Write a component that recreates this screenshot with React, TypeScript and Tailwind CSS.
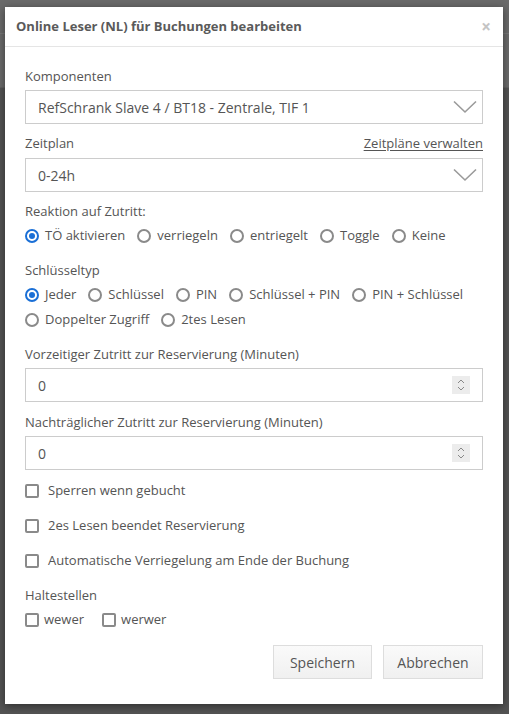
import { useState } from 'react';

const font = { fontFamily: '"Open Sans", "Liberation Sans", sans-serif' };

function Chevron() {
  return (
    <svg width="24" height="14" viewBox="0 0 24 14" className="shrink-0">
      <polyline points="1,1.5 12,12 23,1.5" fill="none" stroke="#9a9a9a" strokeWidth="1.6" />
    </svg>
  );
}

function Spinner() {
  return (
    <div className="w-[18px] h-[18px] bg-[#ececec] flex flex-col items-center justify-center gap-[2px]">
      <svg width="8" height="5" viewBox="0 0 8 5">
        <polyline points="1,4 4,1 7,4" fill="none" stroke="#888" strokeWidth="1" />
      </svg>
      <svg width="8" height="5" viewBox="0 0 8 5">
        <polyline points="1,1 4,4 7,1" fill="none" stroke="#888" strokeWidth="1" />
      </svg>
    </div>
  );
}

function Radio({ label, checked, onClick }: { label: string; checked: boolean; onClick: () => void }) {
  return (
    <label onClick={onClick} className="flex items-center gap-[6px] cursor-pointer h-5">
      <span
        className={
          'w-[14px] h-[14px] rounded-full border-2 flex items-center justify-center ' +
          (checked ? 'border-[#1a6fd6]' : 'border-[#8a8a8a]')
        }
      >
        {checked && <span className="w-[6px] h-[6px] rounded-full bg-[#1a6fd6]" />}
      </span>
      <span>{label}</span>
    </label>
  );
}

function Checkbox({ label, gap = 'gap-[10px]' }: { label: string; gap?: string }) {
  const [on, setOn] = useState(false);
  return (
    <label onClick={() => setOn(!on)} className={'flex items-center cursor-pointer h-5 ' + gap}>
      <span className="w-[14px] h-[14px] rounded-[2px] border-2 border-[#8a8a8a] flex items-center justify-center">
        {on && <span className="w-[6px] h-[6px] bg-[#555]" />}
      </span>
      <span>{label}</span>
    </label>
  );
}

export default function App() {
  const [reaktion, setReaktion] = useState('TÖ aktivieren');
  const [typ, setTyp] = useState('Jeder');

  return (
    <div className="relative w-[509px] h-[714px] overflow-hidden bg-[#535353]" style={font}>
      {/* page behind the overlay */}
      <div className="h-[88px] bg-[#6a6a6a] border-b border-[#606060]">
        <div className="h-[34px] border-b border-[#777]" />
      </div>

      <div className="absolute left-[5px] top-[7px] w-[498px] h-[697px] bg-white shadow-[0_2px_8px_rgba(0,0,0,0.45)] flex flex-col text-[13px] text-[#555]">
        {/* Header */}
        <div className="h-[40px] border-b border-[#e5e5e5] flex items-center justify-between pl-[11px] pr-[12px]">
          <h2 className="font-bold text-[13px] text-[#5a5a5a]">Online Leser (NL) für Buchungen bearbeiten</h2>
          <span className="text-[#c4c4c4] text-[17px] font-bold leading-none">×</span>
        </div>

        {/* Body */}
        <div className="px-5 pt-[19px] flex flex-col">
          <div className="h-5 leading-5">Komponenten</div>
          <div className="mt-1 h-[34px] border border-[#ccc] flex items-center justify-between pl-3 pr-[5px] text-[14px]">
            <span>RefSchrank Slave 4 / BT18 - Zentrale, TIF 1</span>
            <Chevron />
          </div>

          <div className="mt-[9px] h-5 leading-5 flex justify-between">
            <span>Zeitplan</span>
            <a className="underline underline-offset-2">Zeitpläne verwalten</a>
          </div>
          <div className="mt-[5px] h-[34px] border border-[#ccc] flex items-center justify-between pl-3 pr-[5px] text-[14px]">
            <span>0-24h</span>
            <Chevron />
          </div>

          <div className="mt-[9px] h-5 leading-5">Reaktion auf Zutritt:</div>
          <div className="mt-[5px] flex gap-[12px]">
            {['TÖ aktivieren', 'verriegeln', 'entriegelt', 'Toggle', 'Keine'].map((r) => (
              <Radio key={r} label={r} checked={reaktion === r} onClick={() => setReaktion(r)} />
            ))}
          </div>

          <div className="mt-[14px] h-5 leading-5">Schlüsseltyp</div>
          <div className="mt-[5px] flex gap-[12px]">
            {['Jeder', 'Schlüssel', 'PIN', 'Schlüssel + PIN', 'PIN + Schlüssel'].map((r) => (
              <Radio key={r} label={r} checked={typ === r} onClick={() => setTyp(r)} />
            ))}
          </div>
          <div className="mt-[5px] flex gap-[12px]">
            {['Doppelter Zugriff', '2tes Lesen'].map((r) => (
              <Radio key={r} label={r} checked={typ === r} onClick={() => setTyp(r)} />
            ))}
          </div>

          <div className="mt-[14px] h-5 leading-5">Vorzeitiger Zutritt zur Reservierung (Minuten)</div>
          <div className="mt-1 h-[34px] border border-[#ccc] flex items-center justify-between pl-3 pr-3 text-[14px]">
            <span>0</span>
            <Spinner />
          </div>

          <div className="mt-[10px] h-5 leading-5">Nachträglicher Zutritt zur Reservierung (Minuten)</div>
          <div className="mt-1 h-[34px] border border-[#ccc] flex items-center justify-between pl-3 pr-3 text-[14px]">
            <span>0</span>
            <Spinner />
          </div>

          <div className="mt-[11px] flex flex-col gap-[15px]">
            <Checkbox label="Sperren wenn gebucht" gap="gap-[9px]" />
            <Checkbox label="2es Lesen beendet Reservierung" gap="gap-[9px]" />
            <Checkbox label="Automatische Verriegelung am Ende der Buchung" gap="gap-[9px]" />
          </div>

          <div className="mt-[14px] h-5 leading-5">Haltestellen</div>
          <div className="mt-[5px] flex gap-[18px]">
            <Checkbox label="wewer" gap="gap-[5px]" />
            <Checkbox label="werwer" gap="gap-[5px]" />
          </div>

          <div className="mt-[15px] flex justify-end gap-[11px]">
            <button className="w-[99px] h-[34px] border border-[#ddd] bg-gradient-to-b from-[#fafafa] to-[#f0f0f0] text-[#555] text-[14px]">
              Speichern
            </button>
            <button className="w-[100px] h-[34px] border border-[#ddd] bg-gradient-to-b from-[#fafafa] to-[#f0f0f0] text-[#555] text-[14px]">
              Abbrechen
            </button>
          </div>
        </div>
      </div>
    </div>
  );
}
